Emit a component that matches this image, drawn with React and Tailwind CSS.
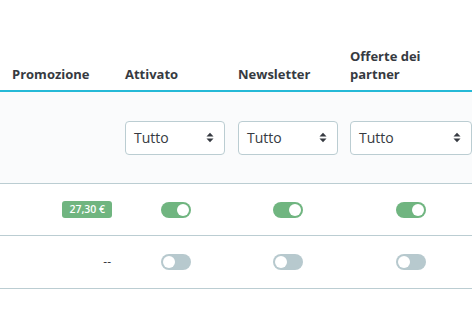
import React from "react";

function Caret() {
  return (
    <svg width="8" height="11" viewBox="0 0 8 11" className="shrink-0">
      <path d="M0.5 4.5 L4 0.8 L7.5 4.5 Z" fill="#363a41" />
      <path d="M0.5 6.5 L4 10.2 L7.5 6.5 Z" fill="#363a41" />
    </svg>
  );
}

function FakeSelect({ w }) {
  return (
    <div
      className={`${w} h-[34px] flex items-center justify-between pl-[8px] pr-[10px] bg-white border border-[#bbcdd2] rounded-[4px] text-[14px] text-[#363a41]`}
    >
      <span>Tutto</span>
      <Caret />
    </div>
  );
}

function Toggle({ on }) {
  return on ? (
    <div className="w-[30px] h-[16px] rounded-full bg-[#70b580] flex items-center justify-end pr-[2px]">
      <div className="w-[12px] h-[12px] rounded-full bg-white" />
    </div>
  ) : (
    <div className="w-[30px] h-[16px] rounded-full bg-[#b7c9ce] flex items-center justify-start pl-[2px]">
      <div className="w-[12px] h-[12px] rounded-full bg-white" />
    </div>
  );
}

export default function App() {
  const cols = "grid grid-cols-[113px_113px_112px_1fr]";
  return (
    <div className="w-[472px] h-[326px] bg-white font-['Open_Sans',sans-serif] text-[#363a41] overflow-hidden">
      {/* header */}
      <div className={`${cols} h-[92px] border-b-2 border-[#25b9d7] text-[13px] font-bold leading-[18px]`}>
        <div className="flex items-end pl-3 pb-[7px]">Promozione</div>
        <div className="flex items-end pl-3 pb-[7px]">Attivato</div>
        <div className="flex items-end pl-3 pb-[7px]">Newsletter</div>
        <div className="flex items-end pl-3 pb-[7px]">
          <span>
            Offerte dei
            <br />
            partner
          </span>
        </div>
      </div>
      {/* filters */}
      <div className={`${cols} h-[92px] bg-[#fafbfc] border-b border-[#bbcdd2] items-center`}>
        <div />
        <div className="pl-3">
          <FakeSelect w="w-[100px]" />
        </div>
        <div className="pl-3">
          <FakeSelect w="w-[100px]" />
        </div>
        <div className="pl-3">
          <FakeSelect w="w-[122px]" />
        </div>
      </div>
      {/* row 1 */}
      <div className={`${cols} h-[52px] border-b border-[#bbcdd2] items-center`}>
        <div className="flex justify-end pr-px">
          <span className="h-[17px] px-[7px] rounded-[3px] bg-[#70b580] text-white text-[10.5px] font-semibold flex items-center leading-none">
            27,30 €
          </span>
        </div>
        <div className="pl-3 flex justify-center">
          <Toggle on />
        </div>
        <div className="pl-3 flex justify-center">
          <Toggle on />
        </div>
        <div className="pl-3 flex justify-center">
          <Toggle on />
        </div>
      </div>
      {/* row 2 */}
      <div className={`${cols} h-[53px] border-b border-[#bbcdd2] items-center`}>
        <div className="flex justify-end pr-[2px] text-[12px] leading-none">--</div>
        <div className="pl-3 flex justify-center">
          <Toggle />
        </div>
        <div className="pl-3 flex justify-center">
          <Toggle />
        </div>
        <div className="pl-3 flex justify-center">
          <Toggle />
        </div>
      </div>
    </div>
  );
}
